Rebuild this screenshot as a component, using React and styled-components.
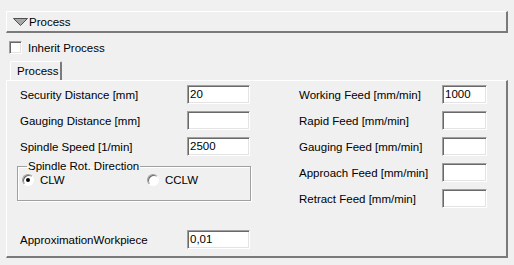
import React from "react";
import styled, { createGlobalStyle } from "styled-components";

const GlobalStyle = createGlobalStyle`
  html, body { margin: 0; padding: 0; background: #f0f0f0; }
  body {
    font-family: Tahoma, "Liberation Sans", "DejaVu Sans", sans-serif;
    font-size: 11.5px;
    color: #000;
  }
  * { box-sizing: border-box; }
`;

const Page = styled.div`
  width: 514px;
  height: 265px;
  padding: 11px 6px 0 6px;
  display: flex;
  flex-direction: column;
`;

const HeaderBar = styled.div`
  height: 22px;
  flex-shrink: 0;
  display: flex;
  align-items: center;
  gap: 1px;
  padding-left: 6px;
  border-top: 1px solid #fff;
  border-left: 1px solid #fff;
  border-right: 2px solid #7a7a7a;
  border-bottom: 2px solid #7a7a7a;
`;

const CheckRow = styled.label`
  display: flex;
  align-items: center;
  gap: 6px;
  height: 13px;
  flex-shrink: 0;
  margin: 8px 0 0 3px;
`;

const Sunken = `
  background: #fff;
  border-top: 1px solid #a0a0a0;
  border-left: 1px solid #a0a0a0;
  border-right: 1px solid #fff;
  border-bottom: 1px solid #fff;
  box-shadow: inset 1px 1px 0 #696969, inset -1px -1px 0 #e3e3e3;
`;

const CheckBox = styled.span`
  width: 13px;
  height: 13px;
  ${Sunken}
`;

const TabStrip = styled.div`
  display: flex;
  flex-shrink: 0;
  margin: 7px 0 0 4px;
  height: 19px;
`;

const Tab = styled.div`
  width: 52px;
  height: 19px;
  padding: 3px 0 0 6px;
  border-top: 1px solid #fff;
  border-left: 1px solid #fff;
  border-right: 2px solid #7a7a7a;
  border-radius: 2px 2px 0 0;
`;

const Panel = styled.div`
  height: 178px;
  flex-shrink: 0;
  border-top: 1px solid #fff;
  border-left: 1px solid #fff;
  border-right: 2px solid #7a7a7a;
  border-bottom: 2px solid #7a7a7a;
  padding: 4px 0 0 13px;
  display: grid;
  grid-template-columns: 230px 188px;
  column-gap: 49px;
  align-items: start;
`;

const Column = styled.div`
  display: flex;
  flex-direction: column;
`;

const Row = styled.div`
  display: flex;
  align-items: center;
  height: 19px;
  margin-bottom: 7px;
  margin-top: ${(p) => p.$top ?? 0}px;
`;

const Label = styled.span`
  width: ${(p) => p.$w}px;
  white-space: nowrap;
`;

const Field = styled.div`
  width: ${(p) => p.$w}px;
  height: 19px;
  padding: 2px 0 0 2px;
  ${Sunken}
`;

const GroupBox = styled.fieldset`
  margin: -3px 0 0 -3px;
  width: 234px;
  height: 41px;
  padding: 2px 0 0 4px;
  border: 1px solid #a0a0a0;
  box-shadow: 1px 1px 0 #fff, inset 1px 1px 0 #fff;
  display: flex;
  align-items: flex-start;
`;

const Legend = styled.legend`
  padding: 0 1px;
  margin-left: 5px;
  line-height: 12px;
`;

const RadioOption = styled.label`
  display: flex;
  align-items: center;
  gap: 6px;
  width: ${(p) => p.$w}px;
`;

const RadioDot = styled.span`
  width: 12px;
  height: 12px;
  border-radius: 50%;
  background: #fff;
  border: 1px solid #a0a0a0;
  border-bottom-color: #fff;
  border-right-color: #fff;
  box-shadow: inset 1px 1px 0 #696969;
  display: flex;
  align-items: center;
  justify-content: center;
  &::after {
    content: "";
    width: 4px;
    height: 4px;
    border-radius: 50%;
    background: ${(p) => (p.$on ? "#000" : "transparent")};
  }
`;

const Triangle = () => (
  <svg width="15" height="8" viewBox="0 0 15 8">
    <path d="M0.5 0.5 L14.5 0.5 L7.5 7.5 Z" fill="#a8a8a8" stroke="#505050" strokeWidth="1" />
  </svg>
);

const left = [
  ["Security Distance [mm]", "20"],
  ["Gauging Distance [mm]", ""],
  ["Spindle Speed [1/min]", "2500"],
];

const right = [
  ["Working Feed [mm/min]", "1000"],
  ["Rapid Feed [mm/min]", ""],
  ["Gauging Feed [mm/min]", ""],
  ["Approach Feed [mm/min]", ""],
  ["Retract Feed [mm/min]", ""],
];

export default function App() {
  return (
    <Page>
      <GlobalStyle />
      <HeaderBar>
        <Triangle />
        <span>Process</span>
      </HeaderBar>
      <CheckRow>
        <CheckBox />
        <span>Inherit Process</span>
      </CheckRow>
      <TabStrip>
        <Tab>Process</Tab>
      </TabStrip>
      <Panel>
        <Column>
          {left.map(([l, v]) => (
            <Row key={l}>
              <Label $w={167}>{l}</Label>
              <Field $w={63}>{v}</Field>
            </Row>
          ))}
          <GroupBox>
            <Legend>Spindle Rot. Direction</Legend>
            <RadioOption $w={125}>
              <RadioDot $on />
              CLW
            </RadioOption>
            <RadioOption $w={90}>
              <RadioDot />
              CCLW
            </RadioOption>
          </GroupBox>
          <Row $top={29}>
            <Label $w={167}>ApproximationWorkpiece</Label>
            <Field $w={63}>0,01</Field>
          </Row>
        </Column>
        <Column>
          {right.map(([l, v]) => (
            <Row key={l}>
              <Label $w={143}>{l}</Label>
              <Field $w={45}>{v}</Field>
            </Row>
          ))}
        </Column>
      </Panel>
    </Page>
  );
}
